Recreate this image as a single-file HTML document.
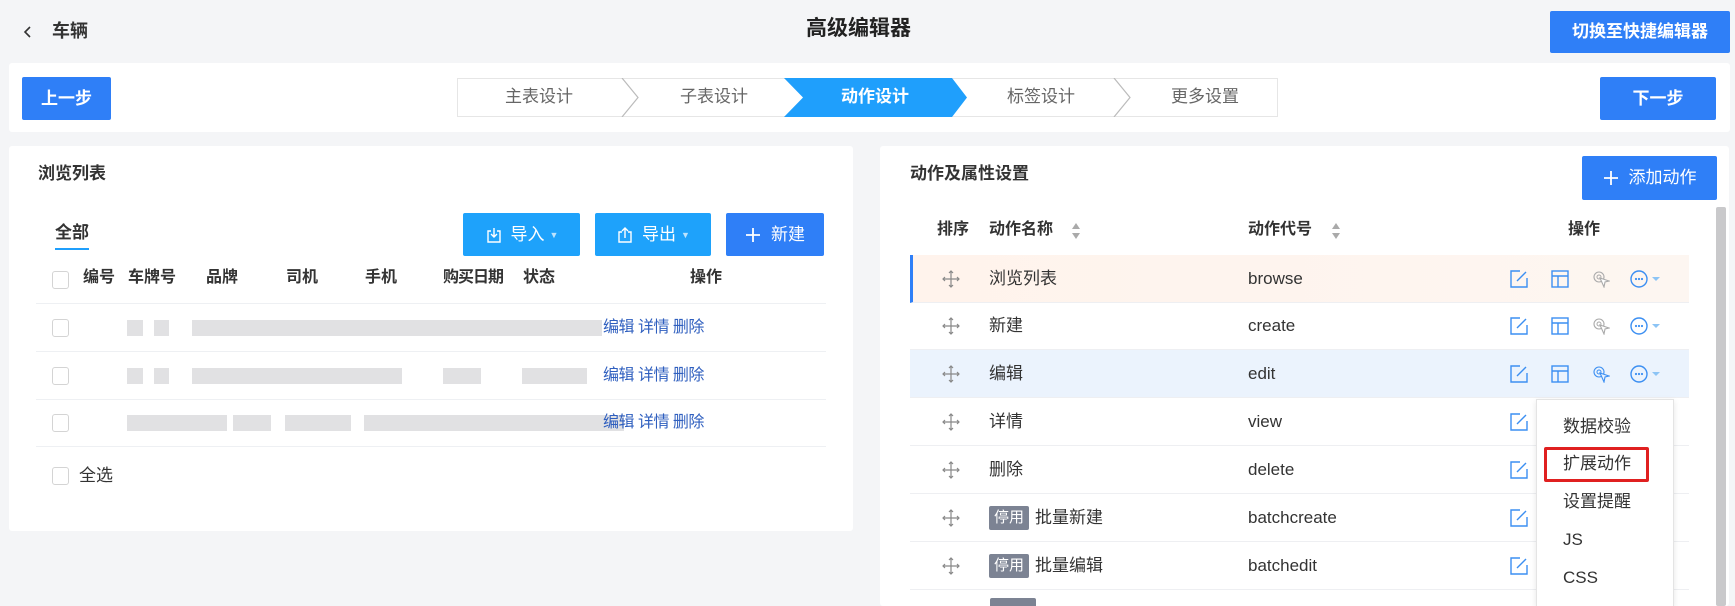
<!DOCTYPE html>
<html style="overflow:hidden;height:606px"><head><meta charset="utf-8">
<style>
*{margin:0;padding:0;box-sizing:border-box}
html,body{overflow:hidden}
body{width:1735px;height:606px;background:#f4f5f7;font-family:"Liberation Sans","Noto Sans CJK SC",sans-serif;color:#333;position:relative;line-height:20px}
.a{position:absolute;line-height:20px}
.btn{position:absolute;color:#fff;border-radius:2px;display:flex;align-items:center;justify-content:center;font-size:17px;line-height:20px}
.card{position:absolute;background:#fff;border-radius:3px}
.th{position:absolute;font-size:16px;font-weight:bold;color:#333;top:268px;line-height:20px}
.blk{position:absolute;height:16px;background:#e1e1e3}
.lnk{position:absolute;left:603px;color:#2f5fbf;font-size:16px;letter-spacing:-0.5px;line-height:20px}
.cb{position:absolute;left:52px;width:17px;height:18px;border:1px solid #d4d4d4;border-radius:3px;background:#fff}
.row{position:absolute;left:910px;width:779px;height:48px;border-bottom:1px solid #eeeff2}
.row .n{position:absolute;left:79px;top:0;height:47px;display:flex;align-items:center;font-size:17px;color:#333}
.row .c{position:absolute;left:338px;top:0;height:47px;display:flex;align-items:center;font-size:17px;color:#333}
.row .d{position:absolute;left:32px;top:15px}
.tag{display:inline-block;background:#7c8393;color:#fff;font-size:15px;padding:0 5px;height:24px;line-height:24px;border-radius:2px;margin-right:6px}
.ic{position:absolute;top:15px}
.st{position:absolute;top:87px;font-size:17px;color:#666}
.dd{position:absolute;left:1563px;font-size:17px}
</style></head><body>
<svg class="a" style="left:23px;top:26px" width="10" height="12"><path d="M7 1 L2 6 L7 11" fill="none" stroke="#333" stroke-width="1.6"/></svg>
<div class="a" style="left:52px;top:21px;font-size:18px;font-weight:bold">车辆</div>
<div class="a" style="left:806px;top:18px;font-size:21px;font-weight:bold;color:#222;line-height:22px">高级编辑器</div>
<div class="btn" style="left:1550px;top:11px;width:180px;height:42px;background:#2f7ff7;font-weight:bold">切换至快捷编辑器</div>

<div class="card" style="left:9px;top:63px;width:1721px;height:69px"></div>
<div class="btn" style="left:22px;top:77px;width:89px;height:43px;background:#2f7ff7;font-weight:bold">上一步</div>
<div class="a" style="left:457px;top:78px;width:821px;height:39px;border:1px solid #e6e6e6;background:#fff"></div>
<svg class="a" style="left:457px;top:78px" width="821" height="39">
<path d="M327 0 L495 0 L510 19.5 L495 39 L327 39 L346 19.5 Z" fill="#1f9ffc"/>
<path d="M165 0 L181 19.5 L165 39" fill="none" stroke="#bbb" stroke-width="1.2"/>
<path d="M657 0 L673 19.5 L657 39" fill="none" stroke="#bbb" stroke-width="1.2"/>
</svg>
<div class="st" style="left:505px">主表设计</div>
<div class="st" style="left:680px">子表设计</div>
<div class="st" style="left:841px;color:#fff;font-weight:bold">动作设计</div>
<div class="st" style="left:1007px">标签设计</div>
<div class="st" style="left:1171px">更多设置</div>
<div class="btn" style="left:1600px;top:77px;width:116px;height:43px;background:#2f7ff7;font-weight:bold">下一步</div>

<div class="card" style="left:9px;top:146px;width:844px;height:385px"></div>
<div class="a" style="left:38px;top:164px;font-size:17px;font-weight:bold">浏览列表</div>
<div class="a" style="left:55px;top:223px;font-size:17px;font-weight:bold">全部</div>
<div class="a" style="left:55px;top:248px;width:34px;height:2px;background:#1f9ffc"></div>
<div class="btn" style="left:463px;top:213px;width:117px;height:43px;background:#1ea2fb">
<svg width="18" height="18" style="margin-right:8px"><path d="M6 5H3v11h12V5h-3M9 2v9M6 8l3 3 3-3" fill="none" stroke="#fff" stroke-width="1.4"/></svg>导入<span style="font-size:9px;margin-left:5px;opacity:.7">▼</span></div>
<div class="btn" style="left:595px;top:213px;width:116px;height:43px;background:#1ea2fb">
<svg width="18" height="18" style="margin-right:8px"><path d="M6 6H3v10h12V6h-3M9 12V2M6 5l3-3 3 3" fill="none" stroke="#fff" stroke-width="1.4"/></svg>导出<span style="font-size:9px;margin-left:5px;opacity:.7">▼</span></div>
<div class="btn" style="left:726px;top:213px;width:98px;height:43px;background:#2f7ff7">
<svg width="16" height="16" style="margin-right:10px"><path d="M8 1v14M1 8h14" stroke="#fff" stroke-width="1.8"/></svg>新建</div>
<div class="cb" style="top:271px"></div>
<div class="th" style="left:83px">编号</div>
<div class="th" style="left:128px">车牌号</div>
<div class="th" style="left:206px">品牌</div>
<div class="th" style="left:286px">司机</div>
<div class="th" style="left:365px">手机</div>
<div class="th" style="left:443px;letter-spacing:-1px">购买日期</div>
<div class="th" style="left:523px">状态</div>
<div class="th" style="left:690px">操作</div>
<div class="a" style="left:36px;top:303px;width:790px;height:1px;background:#eef0f3"></div>
<div class="a" style="left:36px;top:351px;width:790px;height:1px;background:#eef0f3"></div>
<div class="a" style="left:36px;top:399px;width:790px;height:1px;background:#eef0f3"></div>
<div class="a" style="left:36px;top:446px;width:790px;height:1px;background:#eef0f3"></div>
<div class="cb" style="top:319px"></div><div class="cb" style="top:367px"></div><div class="cb" style="top:414px"></div>
<div class="cb" style="top:467px"></div>
<div class="a" style="left:79px;top:466px;font-size:17px">全选</div>
<div class="blk" style="left:127px;top:320px;width:16px"></div><div class="blk" style="left:154px;top:320px;width:15px"></div><div class="blk" style="left:192px;top:320px;width:410px"></div>
<div class="blk" style="left:127px;top:368px;width:16px"></div><div class="blk" style="left:154px;top:368px;width:15px"></div><div class="blk" style="left:192px;top:368px;width:210px"></div><div class="blk" style="left:443px;top:368px;width:38px"></div><div class="blk" style="left:522px;top:368px;width:65px"></div>
<div class="blk" style="left:127px;top:415px;width:100px"></div><div class="blk" style="left:233px;top:415px;width:38px"></div><div class="blk" style="left:285px;top:415px;width:66px"></div><div class="blk" style="left:364px;top:415px;width:260px"></div>
<div class="lnk" style="top:318px">编辑 详情 删除</div>
<div class="lnk" style="top:366px">编辑 详情 删除</div>
<div class="lnk" style="top:413px">编辑 详情 删除</div>

<div class="card" style="left:880px;top:146px;width:849px;height:460px"></div>
<div class="a" style="left:910px;top:164px;font-size:17px;font-weight:bold">动作及属性设置</div>
<div class="btn" style="left:1582px;top:156px;width:135px;height:44px;background:#2f7ff7">
<svg width="16" height="16" style="margin-right:10px"><path d="M8 1v14M1 8h14" stroke="#fff" stroke-width="1.8"/></svg>添加动作</div>
<div class="a" style="left:1716px;top:207px;width:10px;height:399px;background:#c9c9cb;border-radius:2px"></div>
<div class="th" style="left:937px;top:220px">排序</div>
<div class="th" style="left:989px;top:220px">动作名称</div>
<svg class="a" style="left:1071px;top:222px" width="10" height="18"><path d="M5 1L9 7H1Z M5 17L9 11H1Z" fill="#aaa"/></svg>
<div class="th" style="left:1248px;top:220px">动作代号</div>
<svg class="a" style="left:1331px;top:222px" width="10" height="18"><path d="M5 1L9 7H1Z M5 17L9 11H1Z" fill="#aaa"/></svg>
<div class="th" style="left:1568px;top:220px">操作</div>

<svg width="0" height="0" style="position:absolute">
<defs>
<symbol id="drag" viewBox="0 0 18 18"><path d="M9 1v16M1 9h16M7 3l2-2 2 2M7 15l2 2 2-2M3 7L1 9l2 2M15 7l2 2-2 2" fill="none" stroke="#888" stroke-width="1.2"/></symbol>
<symbol id="ed" viewBox="0 0 18 18"><path d="M10 1H1v16h16V8" fill="none" stroke="#3c8ff2" stroke-width="1.4"/><path d="M7 11L16 2" stroke="#3c8ff2" stroke-width="1.4"/></symbol>
<symbol id="lay" viewBox="0 0 18 18"><rect x="1" y="1" width="16" height="16" fill="none" stroke="#3c8ff2" stroke-width="1.4"/><path d="M1 6h16M7 6v11" stroke="#3c8ff2" stroke-width="1.4"/></symbol>
<symbol id="more" viewBox="0 0 30 18"><circle cx="9" cy="9" r="8" fill="none" stroke="#3c8ff2" stroke-width="1.4"/><circle cx="6" cy="9" r="1.1" fill="#3c8ff2"/><circle cx="9" cy="9" r="1.1" fill="#3c8ff2"/><circle cx="12" cy="9" r="1.1" fill="#3c8ff2"/><path d="M22 7h8l-4 4z" fill="#8cc4f5"/></symbol>
</defs></svg>

<div class="row" style="top:255px;background:linear-gradient(90deg,#fff3ec,#fdf6f1);border-left:3px solid #2f7ff7">
<svg class="d" width="18" height="18" style="left:29px"><use href="#drag"/></svg><div class="n" style="left:76px">浏览列表</div><div class="c" style="left:335px">browse</div>
<svg class="ic" style="left:597px" width="18" height="18"><use href="#ed"/></svg><svg class="ic" style="left:638px" width="18" height="18"><use href="#lay"/></svg>
<svg class="ic" style="left:679px" width="18" height="18"><circle cx="7" cy="7" r="5" fill="none" stroke="#aaa" stroke-width="1.1"/><circle cx="7" cy="7" r="2" fill="none" stroke="#aaa"/><path d="M8 8l9 3-4 1-1 5z" fill="#fff" stroke="#aaa" stroke-width="1.1"/></svg>
<svg class="ic" style="left:717px" width="30" height="18"><use href="#more"/></svg></div>

<div class="row" style="top:302px">
<svg class="d" width="18" height="18"><use href="#drag"/></svg><div class="n">新建</div><div class="c">create</div>
<svg class="ic" style="left:600px" width="18" height="18"><use href="#ed"/></svg><svg class="ic" style="left:641px" width="18" height="18"><use href="#lay"/></svg>
<svg class="ic" style="left:682px" width="18" height="18"><circle cx="7" cy="7" r="5" fill="none" stroke="#aaa" stroke-width="1.1"/><circle cx="7" cy="7" r="2" fill="none" stroke="#aaa"/><path d="M8 8l9 3-4 1-1 5z" fill="#fff" stroke="#aaa" stroke-width="1.1"/></svg>
<svg class="ic" style="left:720px" width="30" height="18"><use href="#more"/></svg></div>

<div class="row" style="top:350px;background:#ebf3fd">
<svg class="d" width="18" height="18"><use href="#drag"/></svg><div class="n">编辑</div><div class="c">edit</div>
<svg class="ic" style="left:600px" width="18" height="18"><use href="#ed"/></svg><svg class="ic" style="left:641px" width="18" height="18"><use href="#lay"/></svg>
<svg class="ic" style="left:682px" width="18" height="18"><circle cx="7" cy="7" r="5" fill="none" stroke="#3c8ff2" stroke-width="1.1"/><circle cx="7" cy="7" r="2" fill="none" stroke="#3c8ff2"/><path d="M8 8l9 3-4 1-1 5z" fill="#ebf3fd" stroke="#3c8ff2" stroke-width="1.1"/></svg>
<svg class="ic" style="left:720px" width="30" height="18"><use href="#more"/></svg></div>

<div class="row" style="top:398px"><svg class="d" width="18" height="18"><use href="#drag"/></svg><div class="n">详情</div><div class="c">view</div><svg class="ic" style="left:600px" width="18" height="18"><use href="#ed"/></svg></div>
<div class="row" style="top:446px"><svg class="d" width="18" height="18"><use href="#drag"/></svg><div class="n">删除</div><div class="c">delete</div><svg class="ic" style="left:600px" width="18" height="18"><use href="#ed"/></svg></div>
<div class="row" style="top:494px"><svg class="d" width="18" height="18"><use href="#drag"/></svg><div class="n"><span class="tag">停用</span>批量新建</div><div class="c">batchcreate</div><svg class="ic" style="left:600px" width="18" height="18"><use href="#ed"/></svg></div>
<div class="row" style="top:542px"><svg class="d" width="18" height="18"><use href="#drag"/></svg><div class="n"><span class="tag">停用</span>批量编辑</div><div class="c">batchedit</div><svg class="ic" style="left:600px" width="18" height="18"><use href="#ed"/></svg></div>
<div class="a" style="left:990px;top:598px;width:46px;height:8px;background:#7c8393;border-radius:2px 2px 0 0"></div>

<div class="a" style="left:1536px;top:399px;width:138px;height:207px;background:#fff;border:1px solid #e4e4e4;border-bottom:none;box-shadow:0 2px 6px rgba(0,0,0,.1)"></div>
<div class="dd" style="top:417px">数据校验</div>
<div class="a" style="left:1544px;top:447px;width:105px;height:35px;border:3px solid #e02020;border-radius:2px"></div>
<div class="dd" style="top:454px">扩展动作</div>
<div class="dd" style="top:492px">设置提醒</div>
<div class="dd" style="top:530px">JS</div>
<div class="dd" style="top:568px">CSS</div>
</body></html>
